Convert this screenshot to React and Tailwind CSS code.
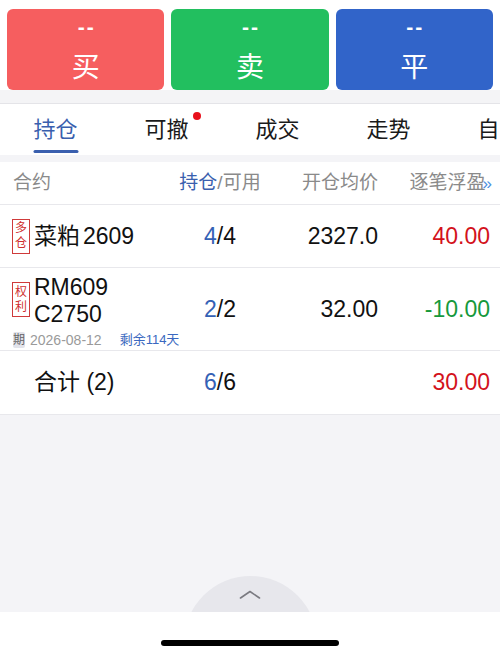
import React from "react";

function Tag({ a, b }) {
  return (
    <div className="w-[18px] h-[35px] shrink-0 border border-[#cf3a3a] flex flex-col items-center justify-center text-[12px] leading-[15px] text-[#cf2f2f]">
      <span>{a}</span>
      <span>{b}</span>
    </div>
  );
}

export default function App() {
  const tabs = ["持仓", "可撤", "成交", "走势", "自选"];
  return (
    <div className="w-[500px] h-[656px] bg-[#f4f4f7] flex flex-col overflow-hidden font-['Liberation_Sans','Noto_Sans_CJK_SC',sans-serif]">
      {/* action buttons */}
      <div className="bg-white pt-[9px] px-[7px] flex gap-[7px]">
        {[
          ["买", "bg-[#f65e5f]"],
          ["卖", "bg-[#22bf5f]"],
          ["平", "bg-[#3164c9]"],
        ].map(([t, c]) => (
          <div key={t} className={`flex-1 h-[81px] rounded-[6px] ${c} flex flex-col items-center pt-[8px] text-white`}>
            <div className="text-[21px] leading-[20px] font-bold tracking-[2px] pl-[2px]">--</div>
            <div className="mt-[11px] text-[28px] leading-[40px]">{t}</div>
          </div>
        ))}
      </div>
      <div className="h-[14px] bg-[#f4f4f6] border-b border-[#e4e4e8]" />

      {/* tabs */}
      <div className="h-[51px] bg-white flex overflow-hidden">
        {tabs.map((t, i) => (
          <div key={t} className="relative w-[111px] shrink-0 flex items-center justify-center">
            <span className={`relative text-[22px] leading-[24px] ${i === 0 ? "text-[#3a5fae]" : "text-[#1a1a1a]"}`}>
              {t}
              {i === 1 && (
                <span className="absolute -right-[12px] -top-[6px] w-[8px] h-[8px] rounded-full bg-[#e8101b]" />
              )}
            </span>
            {i === 0 && (
              <span className="absolute bottom-[2px] left-1/2 -translate-x-1/2 w-[45px] h-[3px] rounded-full bg-[#3a5fae]" />
            )}
          </div>
        ))}
      </div>
      <div className="h-[7px] bg-[#f4f4f7]" />

      {/* header */}
      <div className="h-[43px] bg-white border-b border-[#e8e8ec] flex items-center text-[19px] text-[#8a8a8a]">
        <div className="w-[175px] pl-[13px]">合约</div>
        <div className="w-[90px] text-center whitespace-nowrap">
          <span className="text-[#3a5fae]">持仓</span>/可用
        </div>
        <div className="w-[113px] text-right">开仓均价</div>
        <div className="flex-1 text-right pr-[8px] whitespace-nowrap">
          逐笔浮盈<span className="-ml-[3px] text-[#4a8fe0] text-[17px]">»</span>
        </div>
      </div>

      {/* row 1 */}
      <div className="h-[63px] bg-white border-b border-[#e8e8ec] flex items-center text-[23px] text-[#111]">
        <div className="w-[175px] pl-[12px] flex items-center gap-[4px]">
          <Tag a="多" b="仓" />
          <span className="whitespace-nowrap">菜粕<span className="ml-[3px]">2609</span></span>
        </div>
        <div className="w-[90px] text-center">
          <span className="text-[#3461b5]">4</span>/4
        </div>
        <div className="w-[113px] text-right">2327.0</div>
        <div className="flex-1 text-right pr-[10px] text-[#d3121c]">40.00</div>
      </div>

      {/* row 2 */}
      <div className="h-[83px] bg-white border-b border-[#e8e8ec] flex items-center text-[23px] text-[#111]">
        <div className="w-[175px] pl-[12px] self-stretch flex flex-col pt-[6px]">
          <div className="flex items-start gap-[4px]">
            <div className="mt-[8px]">
              <Tag a="权" b="利" />
            </div>
            <div className="leading-[27px]">
              <div>RM609</div>
              <div>C2750</div>
            </div>
          </div>
          <div className="mt-[4px] flex items-center whitespace-nowrap">
            <span className="w-[16px] h-[16px] ml-[1px] bg-[#e2e3ea] text-[#666] text-[12px] leading-[16px] text-center rounded-[2px]">期</span>
            <span className="ml-[5px] text-[14px] leading-[16px] text-[#9a9a9a]">2026-08-12</span>
            <span className="ml-[18px] text-[13px] leading-[16px] text-[#3a68c0]">剩余114天</span>
          </div>
        </div>
        <div className="w-[90px] text-center">
          <span className="text-[#3461b5]">2</span>/2
        </div>
        <div className="w-[113px] text-right">32.00</div>
        <div className="flex-1 text-right pr-[10px] text-[#16993b]">-10.00</div>
      </div>

      {/* total */}
      <div className="h-[64px] bg-white border-b border-[#e8e8ec] flex items-center text-[23px] text-[#111]">
        <div className="w-[175px] pl-[34px] whitespace-nowrap">合计 (2)</div>
        <div className="w-[90px] text-center">
          <span className="text-[#3461b5]">6</span>/6
        </div>
        <div className="w-[113px]" />
        <div className="flex-1 text-right pr-[10px] text-[#d3121c]">30.00</div>
      </div>

      {/* empty area with pull-up handle */}
      <div className="flex-1 flex flex-col justify-end items-center">
        <div className="w-[133px] h-[36px] overflow-hidden">
          <div className="w-[133px] h-[133px] rounded-full bg-[#e7e7ec] flex justify-center">
            <svg width="22" height="9" viewBox="0 0 22 9" className="mt-[14px]" fill="none">
              <polyline points="1.5,8 11,1.5 20.5,8" stroke="#7a7a80" strokeWidth="1.6" strokeLinecap="round" strokeLinejoin="round" />
            </svg>
          </div>
        </div>
      </div>
      <div className="h-[44px] bg-white flex justify-center">
        <div className="mt-[28px] w-[178px] h-[6px] rounded-full bg-black" />
      </div>
    </div>
  );
}
